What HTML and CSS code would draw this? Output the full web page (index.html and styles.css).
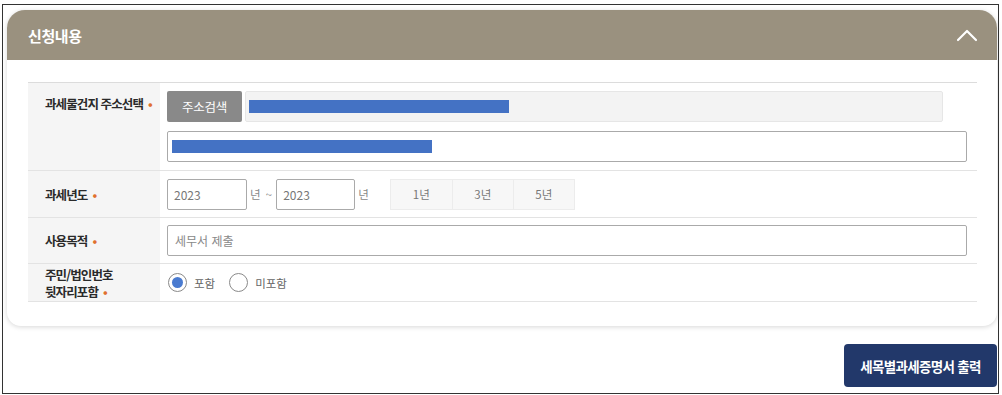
FILE: index.html
```html
<!DOCTYPE html>
<html lang="ko">
<head>
<meta charset="utf-8">
<link rel="stylesheet" href="styles.css">
</head>
<body>
<div class="frame">
  <section class="card">
    <header class="card-head">
      <h2 class="card-title">신청내용</h2>
      <svg class="chev" width="22" height="14" viewBox="0 0 22 14"><polyline points="2,12 11,3 20,12" fill="none" stroke="#fff" stroke-width="2.2" stroke-linecap="round" stroke-linejoin="round"/></svg>
    </header>
    <div class="card-body">
      <div class="form">
        <div class="row row-addr">
          <div class="label label-top">과세물건지 주소선택<span class="req">•</span></div>
          <div class="value value-addr">
            <div class="line">
              <button class="btn-search">주소검색</button>
              <div class="field field-gray"><span class="bar"></span></div>
            </div>
            <div class="field field-full"><span class="bar"></span></div>
          </div>
        </div>
        <div class="row row-year">
          <div class="label">과세년도<span class="req">•</span></div>
          <div class="value value-inline">
            <div class="field field-year year1">2023</div>
            <span class="unit unit-mid">년 ~</span>
            <div class="field field-year year2">2023</div>
            <span class="unit">년</span>
            <div class="seg">
              <span class="seg-item">1년</span>
              <span class="seg-item">3년</span>
              <span class="seg-item">5년</span>
            </div>
          </div>
        </div>
        <div class="row row-purpose">
          <div class="label">사용목적<span class="req">•</span></div>
          <div class="value value-inline">
            <div class="field field-full field-text">세무서 제출</div>
          </div>
        </div>
        <div class="row row-radio">
          <div class="label label-two">주민/법인번호<br>뒷자리포함<span class="req">•</span></div>
          <div class="value value-inline">
            <label class="radio"><span class="circle checked"></span>포함</label>
            <label class="radio"><span class="circle"></span>미포함</label>
          </div>
        </div>
      </div>
    </div>
  </section>
  <div class="actions">
    <button class="btn-print">세목별과세증명서 출력</button>
  </div>
</div>
</body>
</html>
```

FILE: styles.css
```css
* { box-sizing: border-box; }
html, body { margin: 0; padding: 0; background: #fff; }
body {
  font-family: "Noto Sans CJK KR", "Noto Sans", sans-serif;
  color: #333;
}
.frame {
  margin: 4px 0 0 2px;
  width: 997px;
  height: 390px;
  border: 1px solid #333;
  padding: 5px 1px 0 4px;
}
.card {
  background: #fff;
  border-radius: 18px 18px 14px 14px;
  box-shadow: 0 1px 5px rgba(0,0,0,0.16);
  overflow: hidden;
}
.card-head {
  height: 50px;
  background: #9a917f;
  display: flex;
  align-items: center;
  justify-content: space-between;
  padding: 0 19px 0 21px;
}
.card-title {
  margin: 0;
  font-size: 15px;
  font-weight: 700;
  color: #fff;
  letter-spacing: -0.4px;
}
.chev { display: block; margin-top: -1px; }
.card-body {
  padding: 22px 20px 24px 21px;
}
.form {
  border-top: 1px solid #dcdcdc;
}
.row {
  display: flex;
  border-bottom: 1px solid #e3e3e3;
}
.label {
  width: 132px;
  flex: none;
  background: #f5f5f5;
  padding-left: 17px;
  font-size: 12.5px;
  font-weight: 700;
  color: #2a2a2a;
  display: flex;
  align-items: center;
  letter-spacing: -0.9px;
}
.label-top { align-items: flex-start; padding-top: 11px; }
.label-two { line-height: 17px; display: block; padding-top: 2px; }
.req { color: #e0702f; font-weight: 700; margin-left: 5px; }
.value {
  flex: 1;
  padding: 8px 0 8px 7px;
}
.value-addr { display: flex; flex-direction: column; gap: 9px; }
.line { display: flex; gap: 3px; }
.value-inline { display: flex; align-items: center; }
.row-addr { height: 88px; }
.row-year { height: 47px; }
.row-purpose { height: 46px; }
.row-radio { height: 38px; }
.row-radio .value { padding: 0 0 0 8px; }
.btn-search {
  width: 75px;
  height: 31px;
  border: 0;
  border-radius: 2px;
  background: #898989;
  color: #fff;
  font-family: inherit;
  font-size: 12.5px;
  letter-spacing: -0.3px;
  padding: 0;
}
.field {
  height: 31px;
  border: 1px solid #aaa;
  border-radius: 2px;
  background: #fff;
  display: flex;
  align-items: center;
}
.field-gray {
  width: 698px;
  background: #f3f3f3;
  border-color: #e6e6e6;
  padding-left: 3px;
}
.field-full { width: 800px; padding-left: 4px; }
.bar {
  display: block;
  width: 260px;
  height: 13px;
  background: #4472c4;
}
.field-year {
  width: 80px;
  padding-left: 6px;
  font-size: 12px;
  color: #777;
}
.year2 { width: 79px; }
.unit {
  font-size: 11.5px;
  color: #888;
  margin: 0 3px;
  white-space: pre;
}
.unit-mid { margin: 0 4px 0 3px; word-spacing: 2px; }
.seg {
  display: flex;
  margin-left: 18px;
  border: 1px solid #ececec;
  height: 31px;
}
.seg-item {
  width: 61px;
  display: flex;
  align-items: center;
  justify-content: center;
  background: #f7f7f7;
  font-size: 11.5px;
  color: #777;
  border-left: 1px solid #ececec;
}
.seg-item:first-child { border-left: 0; }
.field-text {
  padding-left: 7px;
  font-size: 12px;
  color: #888;
}
.radio {
  display: flex;
  align-items: center;
  font-size: 11.5px;
  color: #666;
  margin-right: 14px;
}
.circle {
  width: 19px;
  height: 19px;
  border-radius: 50%;
  border: 1px solid #8a8a8a;
  background: #fff;
  margin-right: 7px;
  position: relative;
}
.circle.checked::after {
  content: "";
  position: absolute;
  left: 3px;
  top: 3px;
  width: 11px;
  height: 11px;
  border-radius: 50%;
  background: #4a7bd0;
}
.actions {
  display: flex;
  justify-content: flex-end;
  margin-top: 18px;
}
.btn-print {
  width: 153px;
  height: 43px;
  border: 0;
  border-radius: 4px;
  background: #22386a;
  color: #fff;
  font-family: inherit;
  font-size: 13.5px;
  font-weight: 700;
  letter-spacing: -0.7px;
  padding: 0;
}
```
